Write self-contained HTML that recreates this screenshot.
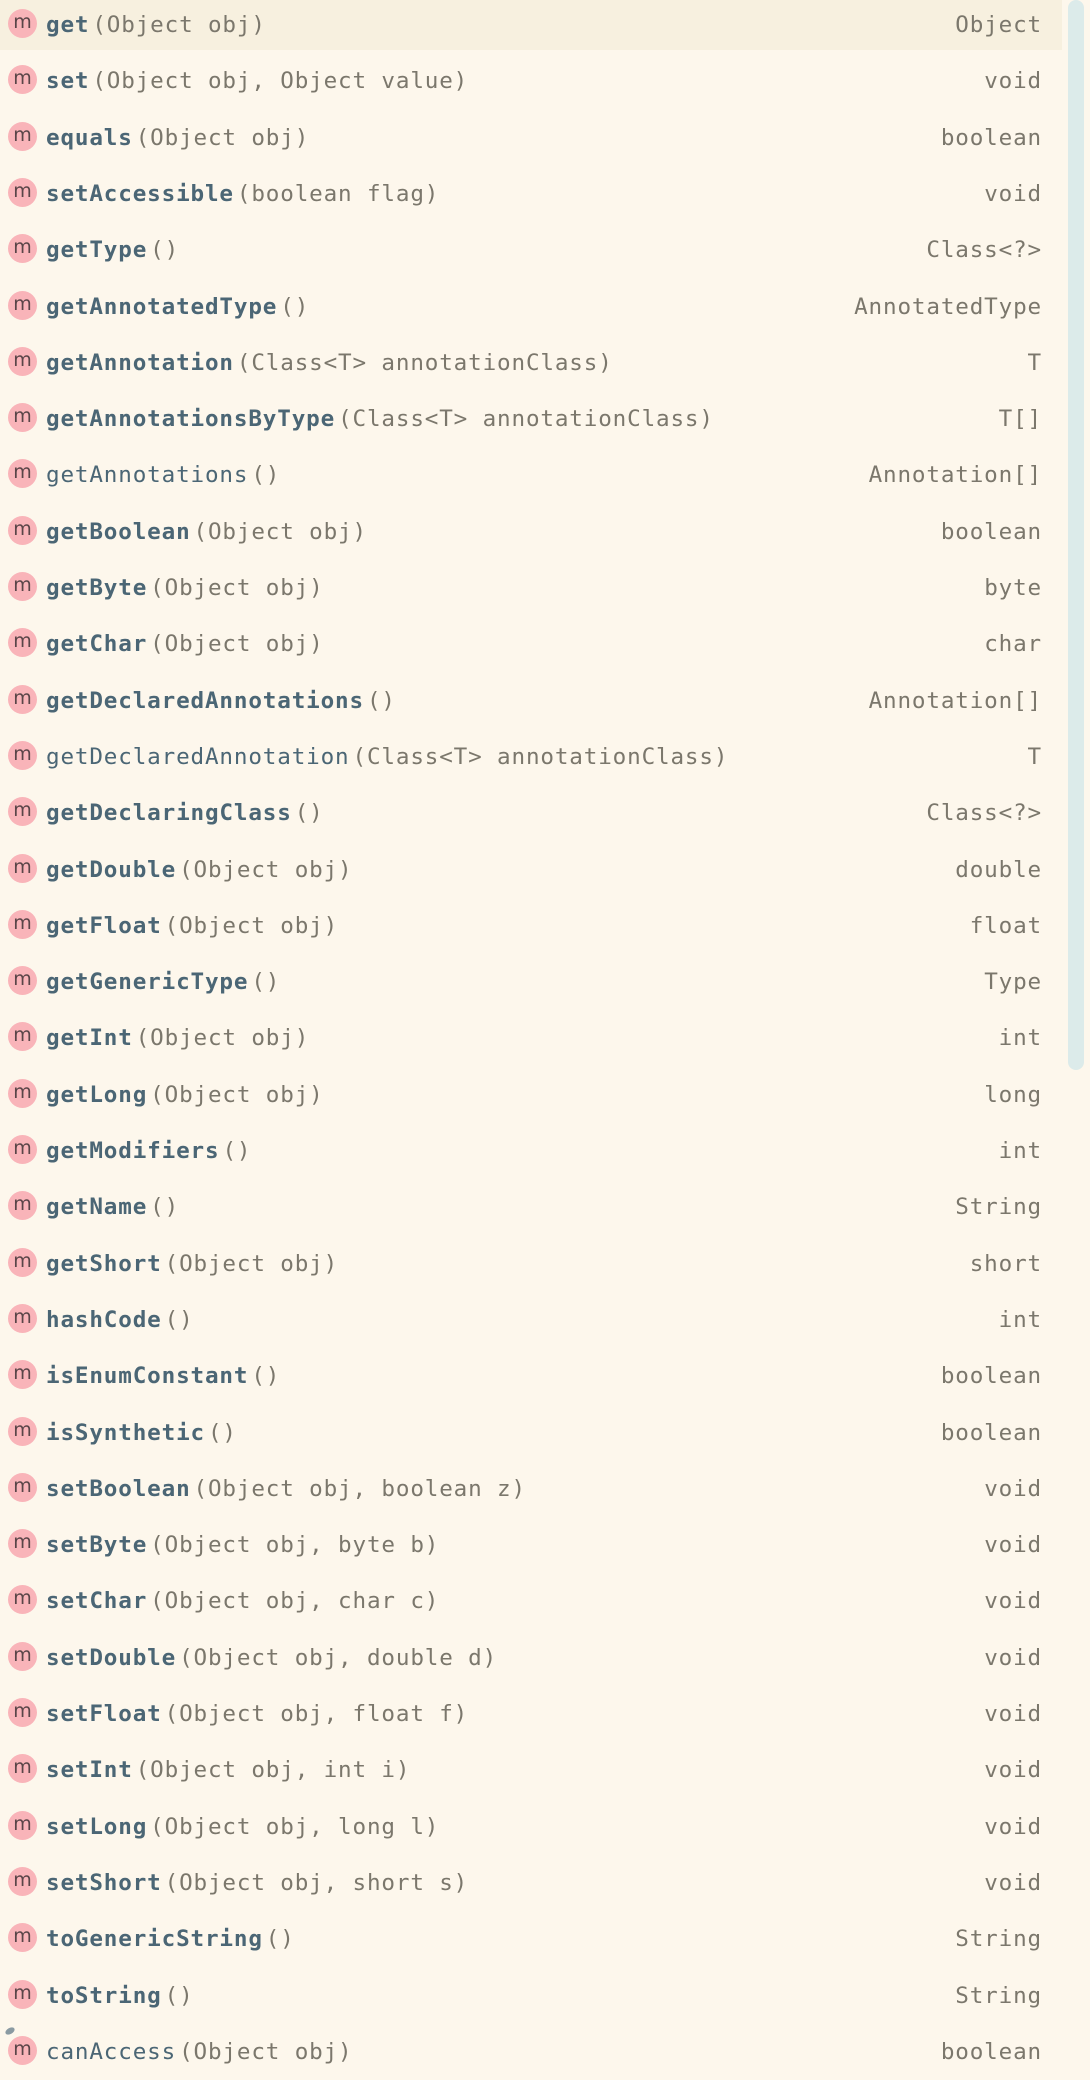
<!DOCTYPE html>
<html><head><meta charset="utf-8"><style>
html,body{margin:0;padding:0}
body{width:1090px;height:2060px;background:#fdf7ec;position:relative;overflow:hidden;font-family:"DejaVu Sans Mono","Liberation Mono",monospace;font-size:22.6px;letter-spacing:0.85px}
.r{position:absolute;left:0;width:1062px;height:56px}
.r.h{background:#f7f0df}
.ic{position:absolute;left:8px;top:14px;width:29px;height:29px;border-radius:50%;background:#f9b4b9;color:#5a4548;font-size:19px;line-height:26px;text-align:center;letter-spacing:0;font-family:"DejaVu Sans","Liberation Sans",sans-serif}
.t{position:absolute;left:46px;top:2px;line-height:56px;white-space:pre;color:#7b776c}
.t b{color:#4b6675;font-weight:bold;margin-right:3px}
.t i{color:#4b6675;font-style:normal;margin-right:3px}
.rt{position:absolute;right:20px;top:2px;line-height:56px;color:#7b776c;white-space:pre}
.sb{position:absolute;left:1068px;top:0;width:16px;height:1070px;background:#dcebea;border-radius:8px}
.pin{position:absolute;left:5px;top:6px;width:10px;height:6px;background:#8a9aa2;border-radius:50%;transform:rotate(-30deg)}
</style></head><body>
<div class="sb"></div>
<div class="r h" style="top:-5px;height:55px"><div class="ic">m</div><div class="t"><b>get</b>(Object obj)</div><div class="rt">Object</div></div>
<div class="r" style="top:51.3px"><div class="ic">m</div><div class="t"><b>set</b>(Object obj, Object value)</div><div class="rt">void</div></div>
<div class="r" style="top:107.6px"><div class="ic">m</div><div class="t"><b>equals</b>(Object obj)</div><div class="rt">boolean</div></div>
<div class="r" style="top:163.9px"><div class="ic">m</div><div class="t"><b>setAccessible</b>(boolean flag)</div><div class="rt">void</div></div>
<div class="r" style="top:220.2px"><div class="ic">m</div><div class="t"><b>getType</b>()</div><div class="rt">Class&lt;?&gt;</div></div>
<div class="r" style="top:276.5px"><div class="ic">m</div><div class="t"><b>getAnnotatedType</b>()</div><div class="rt">AnnotatedType</div></div>
<div class="r" style="top:332.8px"><div class="ic">m</div><div class="t"><b>getAnnotation</b>(Class&lt;T&gt; annotationClass)</div><div class="rt">T</div></div>
<div class="r" style="top:389.1px"><div class="ic">m</div><div class="t"><b>getAnnotationsByType</b>(Class&lt;T&gt; annotationClass)</div><div class="rt">T[]</div></div>
<div class="r" style="top:445.4px"><div class="ic">m</div><div class="t"><i>getAnnotations</i>()</div><div class="rt">Annotation[]</div></div>
<div class="r" style="top:501.7px"><div class="ic">m</div><div class="t"><b>getBoolean</b>(Object obj)</div><div class="rt">boolean</div></div>
<div class="r" style="top:558px"><div class="ic">m</div><div class="t"><b>getByte</b>(Object obj)</div><div class="rt">byte</div></div>
<div class="r" style="top:614.3px"><div class="ic">m</div><div class="t"><b>getChar</b>(Object obj)</div><div class="rt">char</div></div>
<div class="r" style="top:670.6px"><div class="ic">m</div><div class="t"><b>getDeclaredAnnotations</b>()</div><div class="rt">Annotation[]</div></div>
<div class="r" style="top:726.9px"><div class="ic">m</div><div class="t"><i>getDeclaredAnnotation</i>(Class&lt;T&gt; annotationClass)</div><div class="rt">T</div></div>
<div class="r" style="top:783.2px"><div class="ic">m</div><div class="t"><b>getDeclaringClass</b>()</div><div class="rt">Class&lt;?&gt;</div></div>
<div class="r" style="top:839.5px"><div class="ic">m</div><div class="t"><b>getDouble</b>(Object obj)</div><div class="rt">double</div></div>
<div class="r" style="top:895.8px"><div class="ic">m</div><div class="t"><b>getFloat</b>(Object obj)</div><div class="rt">float</div></div>
<div class="r" style="top:952.1px"><div class="ic">m</div><div class="t"><b>getGenericType</b>()</div><div class="rt">Type</div></div>
<div class="r" style="top:1008.4px"><div class="ic">m</div><div class="t"><b>getInt</b>(Object obj)</div><div class="rt">int</div></div>
<div class="r" style="top:1064.7px"><div class="ic">m</div><div class="t"><b>getLong</b>(Object obj)</div><div class="rt">long</div></div>
<div class="r" style="top:1121px"><div class="ic">m</div><div class="t"><b>getModifiers</b>()</div><div class="rt">int</div></div>
<div class="r" style="top:1177.3px"><div class="ic">m</div><div class="t"><b>getName</b>()</div><div class="rt">String</div></div>
<div class="r" style="top:1233.6px"><div class="ic">m</div><div class="t"><b>getShort</b>(Object obj)</div><div class="rt">short</div></div>
<div class="r" style="top:1289.9px"><div class="ic">m</div><div class="t"><b>hashCode</b>()</div><div class="rt">int</div></div>
<div class="r" style="top:1346.2px"><div class="ic">m</div><div class="t"><b>isEnumConstant</b>()</div><div class="rt">boolean</div></div>
<div class="r" style="top:1402.5px"><div class="ic">m</div><div class="t"><b>isSynthetic</b>()</div><div class="rt">boolean</div></div>
<div class="r" style="top:1458.8px"><div class="ic">m</div><div class="t"><b>setBoolean</b>(Object obj, boolean z)</div><div class="rt">void</div></div>
<div class="r" style="top:1515.1px"><div class="ic">m</div><div class="t"><b>setByte</b>(Object obj, byte b)</div><div class="rt">void</div></div>
<div class="r" style="top:1571.4px"><div class="ic">m</div><div class="t"><b>setChar</b>(Object obj, char c)</div><div class="rt">void</div></div>
<div class="r" style="top:1627.7px"><div class="ic">m</div><div class="t"><b>setDouble</b>(Object obj, double d)</div><div class="rt">void</div></div>
<div class="r" style="top:1684px"><div class="ic">m</div><div class="t"><b>setFloat</b>(Object obj, float f)</div><div class="rt">void</div></div>
<div class="r" style="top:1740.3px"><div class="ic">m</div><div class="t"><b>setInt</b>(Object obj, int i)</div><div class="rt">void</div></div>
<div class="r" style="top:1796.6px"><div class="ic">m</div><div class="t"><b>setLong</b>(Object obj, long l)</div><div class="rt">void</div></div>
<div class="r" style="top:1852.9px"><div class="ic">m</div><div class="t"><b>setShort</b>(Object obj, short s)</div><div class="rt">void</div></div>
<div class="r" style="top:1909.2px"><div class="ic">m</div><div class="t"><b>toGenericString</b>()</div><div class="rt">String</div></div>
<div class="r" style="top:1965.5px"><div class="ic">m</div><div class="t"><b>toString</b>()</div><div class="rt">String</div></div>
<div class="r" style="top:2021.8px"><div class="ic">m</div><div class="pin"></div><div class="t"><i>canAccess</i>(Object obj)</div><div class="rt">boolean</div></div>
</body></html>
